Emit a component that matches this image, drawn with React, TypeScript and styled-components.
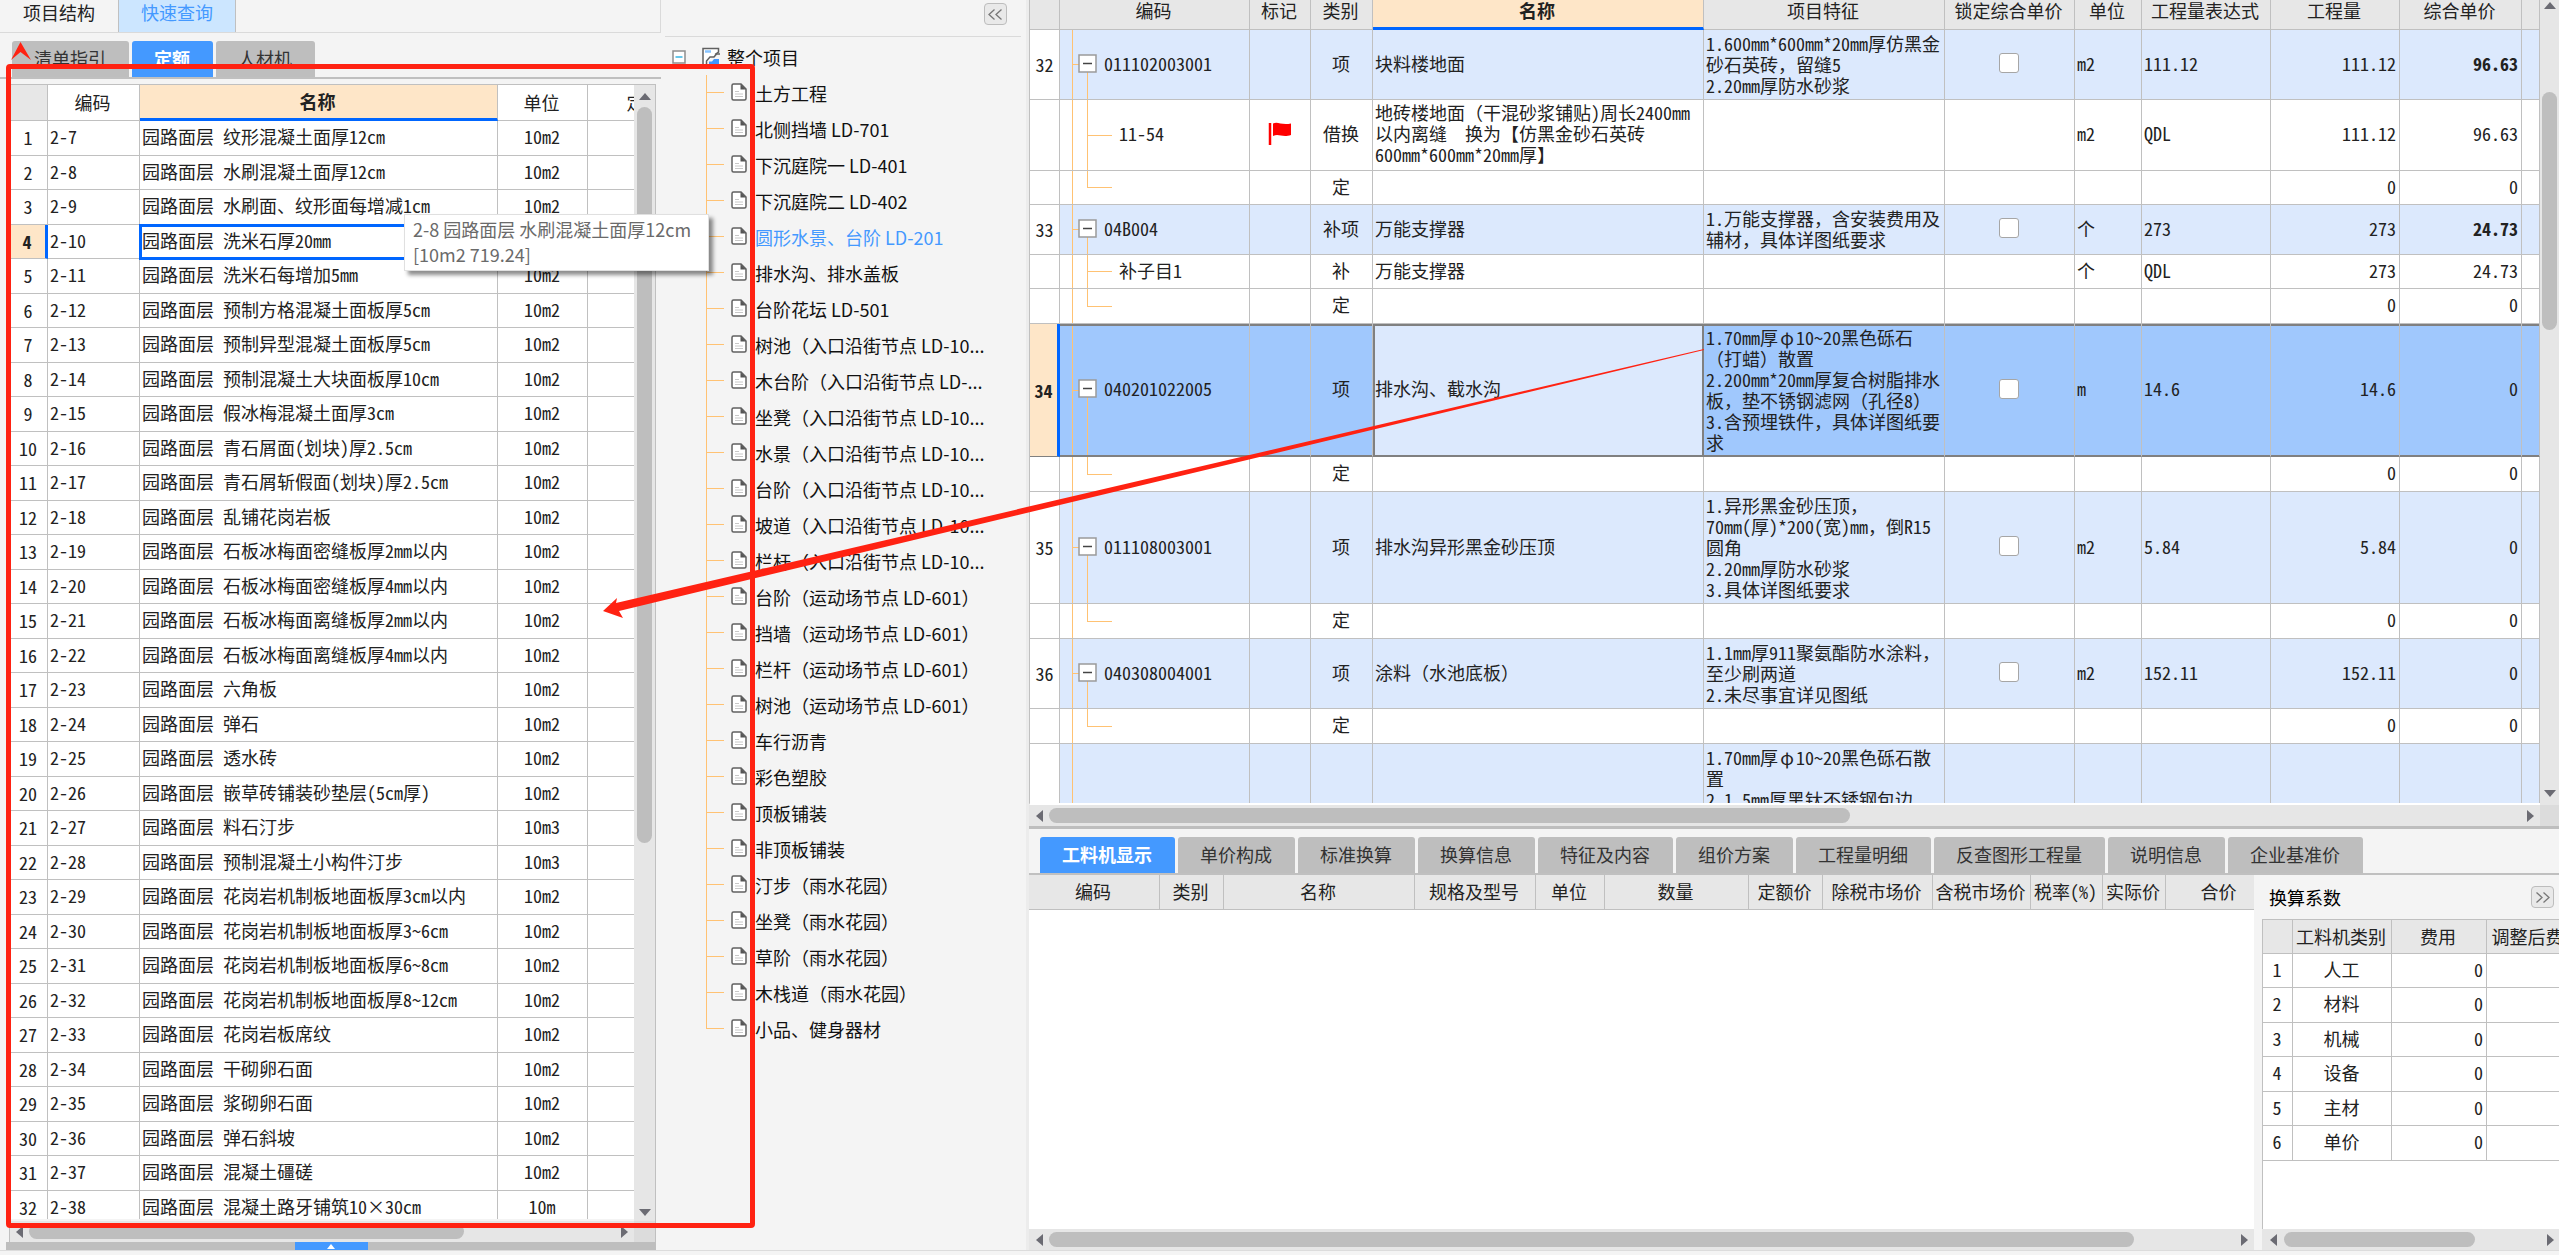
import React from "react";
import styled, { createGlobalStyle, css } from "styled-components";

const LINE = "#c0c0c0";
const BLUE = "#0066ff";
const PEACH = "#fee6c8";
const GUIDE = "#ffc273";
const RED = "#ff2212";

const Global = createGlobalStyle`
  *, *::before, *::after { box-sizing: border-box; }
  body {
    margin: 0;
    background: #f4f4f4;
    color: #222;
    font: 18px/21px "Noto Sans CJK SC", "Liberation Sans", sans-serif;
  }
  button { font: inherit; color: inherit; margin: 0; padding: 0; border: 0; background: none; }
`;

const Page = styled.div`
  position: relative;
  display: flex;
  flex-direction: column;
  height: 100vh;
  overflow: hidden;
`;
const Main = styled.main`
  display: flex;
  flex: 1;
  min-height: 0;
`;
const StatusLine = styled.footer`
  height: 5px;
  border-top: 1px solid #dcdcdc;
  background: #f4f4f4;
`;

/* ---------- scroll bars ---------- */
const Bar = styled.div<{ $vertical?: boolean; $size: number }>`
  display: flex;
  flex: 0 0 ${(p) => p.$size}px;
  flex-direction: ${(p) => (p.$vertical ? "column" : "row")};
  align-items: center;
  background: #e6e6e6;
`;
const BarButton = styled.button<{ $length: number }>`
  display: flex;
  align-items: center;
  justify-content: center;
  flex: 0 0 ${(p) => p.$length}px;
  svg { display: block; }
`;
const Track = styled.div<{ $vertical?: boolean }>`
  display: flex;
  flex: 1;
  align-items: stretch;
  align-self: center;
  flex-direction: ${(p) => (p.$vertical ? "column" : "row")};
  ${(p) => (p.$vertical ? "width: 15px;" : "height: 15px;")}
`;
const Space = styled.div<{ $grow: number }>`
  flex: ${(p) => p.$grow} 1 0;
`;
const Thumb = styled(Space)`
  border-radius: 8px;
  background: #bebebe;
`;

const arrowPath = {
  up: "M0 7 L6 0 L12 7 Z",
  down: "M0 0 L6 7 L12 0 Z",
  left: "M7 0 L0 6 L7 12 Z",
  right: "M0 0 L7 6 L0 12 Z",
};

function Arrow({ dir }: { dir: keyof typeof arrowPath }) {
  const tall = dir === "left" || dir === "right";
  return (
    <svg width={tall ? 7 : 12} height={tall ? 12 : 7} aria-hidden="true">
      <path d={arrowPath[dir]} fill="#6b6b73" />
    </svg>
  );
}

type ScrollProps = {
  vertical?: boolean;
  size: number;
  start: number;
  end: number;
  parts: [number, number, number];
};
function ScrollBar({ vertical, size, start, end, parts }: ScrollProps) {
  return (
    <Bar $vertical={vertical} $size={size}>
      <BarButton $length={start} aria-label={vertical ? "向上" : "向左"}>
        <Arrow dir={vertical ? "up" : "left"} />
      </BarButton>
      <Track $vertical={vertical}>
        <Space $grow={parts[0]} />
        <Thumb $grow={parts[1]} />
        <Space $grow={parts[2]} />
      </Track>
      <BarButton $length={end} aria-label={vertical ? "向下" : "向右"}>
        <Arrow dir={vertical ? "down" : "right"} />
      </BarButton>
    </Bar>
  );
}

const BottomScroll = styled.div`
  display: grid;
  flex: 0 0 21px;
  grid-template-columns: minmax(0, 1fr) auto;
  background: #e6e6e6;
`;
const ScrollCorner = styled.div<{ $width: number }>`
  width: ${(p) => p.$width}px;
  background: #dcdcdc;
`;

/* ---------- grid text: half-width latin, full-width punctuation ---------- */
const Wide = styled.span`
  font-feature-settings: normal;
`;
const WideGreek = styled.span`
  display: inline-block;
  width: 18px;
  text-align: center;
`;
function GridText({ children }: { children?: string }) {
  return (
    <>
      {(children ?? "").split(/([，（）【】　]+|φ)/).map((part, i) => {
        if (i % 2 === 0) return part;
        return part === "φ" ? <WideGreek key={i}>{part}</WideGreek> : <Wide key={i}>{part}</Wide>;
      })}
    </>
  );
}

/* ---------- tables ---------- */
const Table = styled.table<{ $width?: string }>`
  width: ${(p) => p.$width ?? "100%"};
  table-layout: fixed;
  border-collapse: separate;
  border-spacing: 0;
  font-feature-settings: "hwid";
`;
const Col = styled.col<{ $w?: number }>`
  ${(p) => p.$w && `width: ${p.$w}px;`}
`;
const Th = styled.th<{ $active?: boolean; $h?: number; $white?: boolean }>`
  height: ${(p) => p.$h ?? 34}px;
  padding: 0 2px 1px 0;
  overflow: hidden;
  border-right: 1px solid ${LINE};
  border-bottom: 1px solid ${LINE};
  background: ${(p) => (p.$white ? "#fff" : "#e7e7e7")};
  font-weight: 400;
  white-space: nowrap;
  ${(p) =>
    p.$active &&
    css`
      border-bottom: 3px solid ${BLUE};
      background: ${PEACH};
      font-weight: 700;
    `}
`;
const Td = styled.td<{ $align?: "center" | "right"; $bold?: boolean }>`
  padding: 0 3px 3px 2px;
  overflow: hidden;
  border-right: 1px solid ${LINE};
  border-bottom: 1px solid ${LINE};
  background: #fff;
  font-weight: ${(p) => (p.$bold ? 700 : 400)};
  text-align: ${(p) => p.$align ?? "left"};
  white-space: pre;
`;
const Viewport = styled.div`
  flex: 1;
  min-width: 0;
  min-height: 0;
  overflow: hidden;
  background: #fff;
`;
const ViewRow = styled.div`
  display: flex;
  flex: 1;
  min-height: 0;
`;

/* ---------- left: quick query ---------- */
const QueryPanel = styled.section`
  display: flex;
  flex: 0 0 661px;
  flex-direction: column;
  min-width: 0;
`;
const TopTabs = styled.div`
  display: flex;
  height: 33px;
  border-right: 1px solid #dadada;
  border-bottom: 1px solid #dadada;
`;
const TopTab = styled.button<{ $on?: boolean }>`
  width: 118px;
  padding-bottom: 8px;
  ${(p) =>
    p.$on &&
    css`
      border: solid ${LINE};
      border-width: 0 1px;
      background: #cce6ff;
      color: #4499ff;
    `}
`;
const TabStrip = styled.div<{ $left: number }>`
  display: flex;
  gap: 3px;
  padding: 8px 0 0 ${(p) => p.$left}px;
  border-bottom: 2px solid ${LINE};
`;
const Tab = styled.button<{ $on?: boolean }>`
  height: 36px;
  padding: 0 23px 2px 22px;
  border-radius: 3px 3px 0 0;
  background: ${(p) => (p.$on ? "#4499ff" : "#bebebe")};
  color: ${(p) => (p.$on ? "#fff" : "#333")};
  font-weight: ${(p) => (p.$on ? 700 : 400)};
  white-space: nowrap;
`;
const QuotaFrame = styled.div`
  display: flex;
  flex: 1;
  flex-direction: column;
  min-height: 0;
  margin: 5px 5px 0 9px;
  border: solid ${LINE};
  border-width: 1px 1px 0 1px;
`;
const QuotaViewport = styled(Viewport)`
  margin-bottom: 2px;
`;
const QuotaRow = styled.tr<{ $selected?: boolean }>`
  height: 35px;
  &:nth-child(even) { height: 34px; }
  td:first-child { padding-bottom: 1px; }
  ${(p) =>
    p.$selected &&
    css`
      td:first-child {
        border-right: 3px solid ${BLUE};
        background: ${PEACH};
        font-weight: 700;
      }
      td:nth-child(3) {
        outline: 3px solid ${BLUE};
        outline-offset: -2px;
      }
    `}
`;
const CollapseBar = styled.div`
  display: flex;
  justify-content: center;
  height: 8px;
  margin: 0 5px 0 6px;
  background: #bebebe;
`;
const CollapseButton = styled.button`
  display: flex;
  align-items: center;
  justify-content: center;
  width: 73px;
  background: #4499ff;
`;

const quotaItems: [string, string, string][] = [
  ["2-7", "纹形混凝土面厚12cm", "10m2"],
  ["2-8", "水刷混凝土面厚12cm", "10m2"],
  ["2-9", "水刷面、纹形面每增减1cm", "10m2"],
  ["2-10", "洗米石厚20mm", "10m2"],
  ["2-11", "洗米石每增加5mm", "10m2"],
  ["2-12", "预制方格混凝土面板厚5cm", "10m2"],
  ["2-13", "预制异型混凝土面板厚5cm", "10m2"],
  ["2-14", "预制混凝土大块面板厚10cm", "10m2"],
  ["2-15", "假冰梅混凝土面厚3cm", "10m2"],
  ["2-16", "青石屑面(划块)厚2.5cm", "10m2"],
  ["2-17", "青石屑斩假面(划块)厚2.5cm", "10m2"],
  ["2-18", "乱铺花岗岩板", "10m2"],
  ["2-19", "石板冰梅面密缝板厚2mm以内", "10m2"],
  ["2-20", "石板冰梅面密缝板厚4mm以内", "10m2"],
  ["2-21", "石板冰梅面离缝板厚2mm以内", "10m2"],
  ["2-22", "石板冰梅面离缝板厚4mm以内", "10m2"],
  ["2-23", "六角板", "10m2"],
  ["2-24", "弹石", "10m2"],
  ["2-25", "透水砖", "10m2"],
  ["2-26", "嵌草砖铺装砂垫层(5cm厚)", "10m2"],
  ["2-27", "料石汀步", "10m3"],
  ["2-28", "预制混凝土小构件汀步", "10m3"],
  ["2-29", "花岗岩机制板地面板厚3cm以内", "10m2"],
  ["2-30", "花岗岩机制板地面板厚3~6cm", "10m2"],
  ["2-31", "花岗岩机制板地面板厚6~8cm", "10m2"],
  ["2-32", "花岗岩机制板地面板厚8~12cm", "10m2"],
  ["2-33", "花岗岩板席纹", "10m2"],
  ["2-34", "干砌卵石面", "10m2"],
  ["2-35", "浆砌卵石面", "10m2"],
  ["2-36", "弹石斜坡", "10m2"],
  ["2-37", "混凝土礓磋", "10m2"],
  ["2-38", "混凝土路牙铺筑10×30cm", "10m"],
];

function QuickQuery() {
  return (
    <QueryPanel>
      <TopTabs role="tablist">
        <TopTab role="tab">项目结构</TopTab>
        <TopTab role="tab" aria-selected $on>快速查询</TopTab>
      </TopTabs>
      <TabStrip $left={12} role="tablist">
        <Tab role="tab">清单指引</Tab>
        <Tab role="tab" aria-selected $on>定额</Tab>
        <Tab role="tab">人材机</Tab>
      </TabStrip>
      <QuotaFrame>
        <ViewRow>
          <QuotaViewport>
            <Table $width="712px">
              <colgroup>
                <Col $w={38} /><Col $w={92} /><Col $w={358} /><Col $w={90} /><Col $w={134} />
              </colgroup>
              <thead>
                <tr>
                  <Th $h={36} />
                  <Th $white>编码</Th>
                  <Th $active>名称</Th>
                  <Th $white>单位</Th>
                  <Th $white>定额价</Th>
                </tr>
              </thead>
              <tbody>
                {quotaItems.map(([code, name, unit], i) => (
                  <QuotaRow key={code} $selected={i === 3}>
                    <Td $align="center">{i + 1}</Td>
                    <Td>{code}</Td>
                    <Td>{"园路面层 " + name}</Td>
                    <Td $align="center">{unit}</Td>
                    <Td />
                  </QuotaRow>
                ))}
              </tbody>
            </Table>
          </QuotaViewport>
          <ScrollBar vertical size={21} start={22} end={18} parts={[0, 735, 360]} />
        </ViewRow>
        <BottomScroll>
          <ScrollBar size={21} start={19} end={20} parts={[0, 435, 150]} />
          <ScrollCorner $width={21} />
        </BottomScroll>
      </QuotaFrame>
      <CollapseBar>
        <CollapseButton aria-label="展开">
          <svg width="8" height="5" aria-hidden="true"><path d="M0 5L4 0L8 5Z" fill="#fff" /></svg>
        </CollapseButton>
      </CollapseBar>
    </QueryPanel>
  );
}

/* ---------- middle: project tree ---------- */
const TreePanel = styled.section`
  flex: 0 0 365px;
  overflow: hidden;
`;
const TreeHead = styled.div`
  display: flex;
  justify-content: flex-end;
  height: 37px;
  margin: 0 5px 2px 4px;
  padding: 3px 14px 0 0;
  border-bottom: 1px solid #dadada;
`;
const ChevronButton = styled.button`
  display: flex;
  align-items: center;
  justify-content: center;
  width: 23px;
  height: 22px;
  border: 1px solid #bdbdbd;
  border-radius: 4px;
  background: #e9e9e9;
`;
const TreeRoot = styled.div`
  display: flex;
  align-items: center;
  height: 36px;
  padding-left: 11px;
  color: #111;
  svg { display: block; }
`;
const TreeBox = styled.button`
  width: 14px;
  height: 14px;
  margin-right: 15px;
`;
const RootIcon = styled.span`
  width: 26px;
`;
const TreeList = styled.ul`
  margin: 0;
  padding: 0;
  list-style: none;
`;
const TreeItem = styled.li<{ $on?: boolean }>`
  display: flex;
  align-items: center;
  gap: 8px;
  height: 36px;
  padding-left: 70px;
  color: ${(p) => (p.$on ? "#4499ff" : "#111")};
  white-space: nowrap;
  background:
    linear-gradient(${GUIDE}, ${GUIDE}) 45px 0 / 1px 100% no-repeat,
    linear-gradient(${GUIDE}, ${GUIDE}) 45px 17px / 18px 1px no-repeat;
  &:last-child {
    background:
      linear-gradient(${GUIDE}, ${GUIDE}) 45px 0 / 1px 17px no-repeat,
      linear-gradient(${GUIDE}, ${GUIDE}) 45px 17px / 18px 1px no-repeat;
  }
  svg { display: block; margin-bottom: 2px; }
`;

const treeItems = [
  "土方工程",
  "北侧挡墙 LD-701",
  "下沉庭院一 LD-401",
  "下沉庭院二 LD-402",
  "圆形水景、台阶 LD-201",
  "排水沟、排水盖板",
  "台阶花坛 LD-501",
  "树池（入口沿街节点 LD-10...",
  "木台阶（入口沿街节点 LD-...",
  "坐凳（入口沿街节点 LD-10...",
  "水景（入口沿街节点 LD-10...",
  "台阶（入口沿街节点 LD-10...",
  "坡道（入口沿街节点 LD-10...",
  "栏杆（入口沿街节点 LD-10...",
  "台阶（运动场节点 LD-601）",
  "挡墙（运动场节点 LD-601）",
  "栏杆（运动场节点 LD-601）",
  "树池（运动场节点 LD-601）",
  "车行沥青",
  "彩色塑胶",
  "顶板铺装",
  "非顶板铺装",
  "汀步（雨水花园）",
  "坐凳（雨水花园）",
  "草阶（雨水花园）",
  "木栈道（雨水花园）",
  "小品、健身器材",
];

function PageIcon() {
  return (
    <svg width="16" height="18" aria-hidden="true">
      <path d="M1 2.5Q1 1 2.5 1H10L15 6V15.5Q15 17 13.5 17H2.5Q1 17 1 15.5Z" fill="#fff" stroke="#606060" strokeWidth="1.5" />
      <path d="M9.5 1L15 6.5H9.5Z" fill="#555" />
      <path d="M4 8.5H8M4 11H12M4 13.5H12" stroke="#c8c8c8" />
    </svg>
  );
}

function ProjectTree() {
  return (
    <TreePanel>
      <TreeHead>
        <ChevronButton aria-label="收起">
          <svg width="15" height="11" aria-hidden="true">
            <path d="M6.5 .5L1 5.5L6.5 10.5M13.5 .5L8 5.5L13.5 10.5" fill="none" stroke="#777" strokeWidth="1.3" />
          </svg>
        </ChevronButton>
      </TreeHead>
      <TreeRoot>
        <TreeBox aria-label="折叠">
          <svg width="14" height="14" aria-hidden="true">
            <rect x="1" y="1" width="12" height="12" fill="#fff" stroke="#8e8e8e" strokeWidth="1.5" />
            <path d="M3.5 7H10.5" stroke="#35b5e5" strokeWidth="1.5" />
          </svg>
        </TreeBox>
        <RootIcon>
          <svg width="20" height="20" aria-hidden="true">
            <path d="M2 19V1.5H17.5V5L14 7.5" fill="#fff" stroke="#606060" strokeWidth="1.5" />
            <path d="M4 4.5H10" stroke="#88c4ff" strokeWidth="2.5" />
            <path d="M5.5 19V14L9 10H13L15.5 7H19" fill="none" stroke="#606060" strokeWidth="1.5" />
            <path d="M8 14.5H11L13 12H18V20H8Z" fill="#3f95ff" />
          </svg>
        </RootIcon>
        整个项目
      </TreeRoot>
      <TreeList>
        {treeItems.map((label, i) => (
          <TreeItem key={i} $on={i === 4}>
            <PageIcon />
            {label}
          </TreeItem>
        ))}
      </TreeList>
    </TreePanel>
  );
}

/* ---------- right: bill of quantities ---------- */
const Work = styled.section`
  display: flex;
  flex: 1;
  flex-direction: column;
  min-width: 0;
  border-left: 3px solid #ececec;
`;
const BillArea = styled.div`
  display: flex;
  flex: 828 1 0;
  flex-direction: column;
  min-height: 0;
  border-bottom: 3px solid #bebebe;
`;
const BillViewport = styled(Viewport)`
  border-bottom: 2px solid #fff;
  border-left: 1px solid ${LINE};
`;
const BillTh = styled(Th)`
  height: 30px;
  vertical-align: top;
  line-height: 20px;
`;
const rail = `linear-gradient(${GUIDE}, ${GUIDE})`;
const BillRow = styled.tr<{ $h: number; $item?: boolean; $selected?: boolean }>`
  height: ${(p) => p.$h}px;
  td { background-color: ${(p) => (p.$item ? "#dce9fd" : "#fff")}; }
  td:first-child { padding: 0; background: #fff; }
  ${(p) =>
    p.$selected &&
    css`
      td {
        background-color: #a0c8fd;
        border-bottom-color: #808080;
        box-shadow: inset 0 2px 0 #808080, inset 0 -1px 0 #808080;
      }
      td:first-child {
        border-right: 3px solid ${BLUE};
        box-shadow: none;
        background: ${PEACH};
        font-weight: 700;
      }
      td:nth-child(5) {
        border-right-color: #808080;
        background-color: #dce9fd;
        box-shadow: inset 2px 2px 0 #808080, inset -1px -1px 0 #808080;
      }
    `}
`;
const CodeCell = styled(Td)<{ $kind: "item" | "mid" | "last" | "open" }>`
  padding-left: ${(p) => (p.$kind === "item" ? 18 : 59)}px;
  background-repeat: no-repeat;
  ${(p) =>
    p.$kind === "item" &&
    css`
      background-image: ${rail}, ${rail}, ${rail};
      background-position: 12px 0, 12px 50%, 27px 100%;
      background-size: 1px 100%, 8px 1px, 1px 50%;
    `}
  ${(p) =>
    p.$kind === "mid" &&
    css`
      background-image: ${rail}, ${rail}, ${rail};
      background-position: 12px 0, 27px 50%, 27px 0;
      background-size: 1px 100%, 25px 1px, 1px 100%;
    `}
  ${(p) =>
    p.$kind === "last" &&
    css`
      background-image: ${rail}, ${rail}, ${rail};
      background-position: 12px 0, 27px 50%, 27px 0;
      background-size: 1px 100%, 25px 1px, 1px 50%;
    `}
  ${(p) =>
    p.$kind === "open" &&
    css`
      background-image: ${rail};
      background-position: 12px 0;
      background-size: 1px 100%;
    `}
`;
const CodeLine = styled.span`
  display: flex;
  align-items: center;
  gap: 7px;
`;
const Toggle = styled.button`
  display: block;
  width: 19px;
  height: 19px;
  svg { display: block; }
`;
const FeatureText = styled.div`
  padding: 2px 0 0;
  white-space: pre;
`;
const Check = styled.input`
  display: block;
  width: 20px;
  height: 20px;
  margin: 0 auto;
  appearance: none;
  border: 1px solid #a6a6a6;
  border-radius: 3px;
  background: #fff;
`;
const FlagSlot = styled.span`
  display: flex;
  justify-content: center;
`;

type Row = {
  h: number;
  no?: string;
  code?: string;
  kind: "item" | "mid" | "last" | "open";
  flag?: boolean;
  type?: string;
  name?: string;
  feature?: string;
  unit?: string;
  expr?: string;
  qty?: string;
  price?: string;
  bold?: boolean;
  selected?: boolean;
};
const fixed = (h: number): Row => ({ h, kind: "last", type: "定", qty: "0", price: "0" });

const billRows: Row[] = [
  { h: 70, no: "32", code: "011102003001", kind: "item", type: "项", name: "块料楼地面", feature: "1.600mm*600mm*20mm厚仿黑金\n砂石英砖，留缝5\n2.20mm厚防水砂浆", unit: "m2", expr: "111.12", qty: "111.12", price: "96.63", bold: true },
  { h: 71, code: "11-54", kind: "mid", flag: true, type: "借换", name: "地砖楼地面（干混砂浆铺贴)周长2400mm\n以内离缝　换为【仿黑金砂石英砖\n600mm*600mm*20mm厚】", unit: "m2", expr: "QDL", qty: "111.12", price: "96.63" },
  fixed(34),
  { h: 50, no: "33", code: "04B004", kind: "item", type: "补项", name: "万能支撑器", feature: "1.万能支撑器，含安装费用及\n辅材，具体详图纸要求", unit: "个", expr: "273", qty: "273", price: "24.73", bold: true },
  { h: 34, code: "补子目1", kind: "mid", type: "补", name: "万能支撑器", unit: "个", expr: "QDL", qty: "273", price: "24.73" },
  fixed(35),
  { h: 133, no: "34", code: "040201022005", kind: "item", type: "项", name: "排水沟、截水沟", feature: "1.70mm厚φ10~20黑色砾石\n（打蜡）散置\n2.200mm*20mm厚复合树脂排水\n板，垫不锈钢滤网（孔径8）\n3.含预埋铁件，具体详图纸要\n求", unit: "m", expr: "14.6", qty: "14.6", price: "0", selected: true },
  fixed(35),
  { h: 112, no: "35", code: "011108003001", kind: "item", type: "项", name: "排水沟异形黑金砂压顶", feature: "1.异形黑金砂压顶，\n70mm(厚)*200(宽)mm，倒R15\n圆角\n2.20mm厚防水砂浆\n3.具体详图纸要求", unit: "m2", expr: "5.84", qty: "5.84", price: "0" },
  fixed(35),
  { h: 70, no: "36", code: "040308004001", kind: "item", type: "项", name: "涂料（水池底板）", feature: "1.1mm厚911聚氨酯防水涂料，\n至少刷两道\n2.未尽事宜详见图纸", unit: "m2", expr: "152.11", qty: "152.11", price: "0" },
  fixed(35),
  { h: 70, kind: "open", feature: "1.70mm厚φ10~20黑色砾石散\n置\n2.1.5mm厚黑钛不锈钢包边" },
];

function Bill() {
  return (
    <BillArea>
      <ViewRow>
        <BillViewport>
          <Table>
            <colgroup>
              <Col $w={30} /><Col $w={190} /><Col $w={61} /><Col $w={62} /><Col $w={331} />
              <Col $w={241} /><Col $w={130} /><Col $w={67} /><Col $w={129} /><Col $w={129} />
              <Col $w={122} /><Col />
            </colgroup>
            <thead>
              <tr>
                <BillTh />
                <BillTh>编码</BillTh>
                <BillTh>标记</BillTh>
                <BillTh>类别</BillTh>
                <BillTh $active>名称</BillTh>
                <BillTh>项目特征</BillTh>
                <BillTh>锁定综合单价</BillTh>
                <BillTh>单位</BillTh>
                <BillTh>工程量表达式</BillTh>
                <BillTh>工程量</BillTh>
                <BillTh>综合单价</BillTh>
                <BillTh />
              </tr>
            </thead>
            <tbody>
              {billRows.map((r, i) => {
                const item = r.kind === "item" || r.kind === "open";
                return (
                  <BillRow key={i} $h={r.h} $item={item} $selected={r.selected}>
                    <Td $align="center">{r.no}</Td>
                    <CodeCell $kind={r.kind}>
                      {r.kind === "item" ? (
                        <CodeLine>
                          <Toggle aria-label="折叠">
                            <svg width="19" height="19" aria-hidden="true">
                              <rect x="1" y="1" width="17" height="17" fill="#fff" stroke="#9a9a9a" strokeWidth="1.5" />
                              <path d="M5 9.5H14" stroke="#444" strokeWidth="1.5" />
                            </svg>
                          </Toggle>
                          {r.code}
                        </CodeLine>
                      ) : (
                        r.code
                      )}
                    </CodeCell>
                    <Td>
                      {r.flag && (
                        <FlagSlot>
                          <svg width="24" height="24" aria-hidden="true">
                            <path d="M2 1V23" stroke="#f00" strokeWidth="2.5" />
                            <path d="M5 1.5C10 -1 13 3.5 23 1.5V13C14 16 11 11 5 14Z" fill="#f00" />
                          </svg>
                        </FlagSlot>
                      )}
                    </Td>
                    <Td $align="center">{r.type}</Td>
                    <Td><GridText>{r.name}</GridText></Td>
                    <Td>{r.feature && <FeatureText><GridText>{r.feature}</GridText></FeatureText>}</Td>
                    <Td>{r.kind === "item" && <Check type="checkbox" aria-label={"锁定综合单价 " + r.code} />}</Td>
                    <Td>{r.unit}</Td>
                    <Td>{r.expr}</Td>
                    <Td $align="right">{r.qty}</Td>
                    <Td $align="right" $bold={r.bold}>{r.price}</Td>
                    <Td />
                  </BillRow>
                );
              })}
            </tbody>
          </Table>
        </BillViewport>
        <ScrollBar vertical size={19} start={10} end={24} parts={[83, 239, 454]} />
      </ViewRow>
      <BottomScroll>
        <ScrollBar size={21} start={20} end={20} parts={[0, 801, 670]} />
        <ScrollCorner $width={19} />
      </BottomScroll>
    </BillArea>
  );
}

/* ---------- right bottom: details ---------- */
const DetailArea = styled.div`
  display: flex;
  flex: 422 1 0;
  flex-direction: column;
  min-height: 0;
`;
const DetailBody = styled.div`
  display: grid;
  flex: 1;
  grid-template-columns: minmax(0, 1fr) 297px;
  gap: 8px;
  min-height: 0;
`;
const DetailPane = styled.div`
  display: flex;
  flex-direction: column;
  min-width: 0;
  min-height: 0;
`;
const RatioHead = styled.div`
  display: flex;
  align-items: center;
  justify-content: space-between;
  height: 44px;
  padding: 0 5px 0 7px;
  color: #000;
`;
const RatioViewport = styled(Viewport)`
  border: solid ${LINE};
  border-width: 1px 0 0 1px;
`;
const RatioTr = styled.tr`
  height: 34px;
  &:nth-child(even) { height: 35px; }
`;

const detailTabs = ["工料机显示", "单价构成", "标准换算", "换算信息", "特征及内容", "组价方案", "工程量明细", "反查图形工程量", "说明信息", "企业基准价"];
const detailCols: [string, number][] = [
  ["编码", 131], ["类别", 64], ["名称", 191], ["规格及型号", 121], ["单位", 69], ["数量", 144],
  ["定额价", 74], ["除税市场价", 110], ["含税市场价", 98], ["税率(%)", 72], ["实际价", 63], ["合价", 108],
];
const ratioRows = ["人工", "材料", "机械", "设备", "主材", "单价"];

function Details() {
  return (
    <DetailArea>
      <TabStrip $left={11} role="tablist">
        {detailTabs.map((t, i) => (
          <Tab key={t} role="tab" aria-selected={i === 0} $on={i === 0}>{t}</Tab>
        ))}
      </TabStrip>
      <DetailBody>
        <DetailPane>
          <Viewport>
            <Table $width="1245px">
              <colgroup>{detailCols.map(([t, w]) => <Col key={t} $w={w} />)}</colgroup>
              <thead>
                <tr>{detailCols.map(([t]) => <Th key={t} $h={35}>{t}</Th>)}</tr>
              </thead>
            </Table>
          </Viewport>
          <ScrollBar size={21} start={20} end={20} parts={[0, 1086, 100]} />
        </DetailPane>
        <DetailPane>
          <RatioHead>
            换算系数
            <ChevronButton aria-label="展开">
              <svg width="15" height="11" aria-hidden="true">
                <path d="M1.5 .5L7 5.5L1.5 10.5M8.5 .5L14 5.5L8.5 10.5" fill="none" stroke="#777" strokeWidth="1.3" />
              </svg>
            </ChevronButton>
          </RatioHead>
          <RatioViewport>
            <Table $width="326px">
              <colgroup><Col $w={30} /><Col $w={99} /><Col $w={95} /><Col $w={102} /></colgroup>
              <thead>
                <tr>
                  <Th /><Th>工料机类别</Th><Th>费用</Th><Th>调整后费用</Th>
                </tr>
              </thead>
              <tbody>
                {ratioRows.map((t, i) => (
                  <RatioTr key={t}>
                    <Td $align="center">{i + 1}</Td>
                    <Td $align="center">{t}</Td>
                    <Td $align="right">0</Td>
                    <Td />
                  </RatioTr>
                ))}
              </tbody>
            </Table>
          </RatioViewport>
          <ScrollBar size={21} start={22} end={18} parts={[0, 191, 66]} />
        </DetailPane>
      </DetailBody>
    </DetailArea>
  );
}

/* ---------- overlays ---------- */
const Tooltip = styled.div`
  position: absolute;
  top: 214px;
  left: 404px;
  padding: 2px 17px 3px 8px;
  border: 1px solid #e0e0e0;
  background: #fff;
  box-shadow: 4px 4px 4px rgba(0, 0, 0, 0.45);
  color: #6a6a6a;
  line-height: 25px;
  white-space: pre;
`;
const MarkBox = styled.div`
  position: absolute;
  top: 64px;
  bottom: 27px;
  left: 6px;
  width: 749px;
  border: 5px solid ${RED};
  border-radius: 4px;
  pointer-events: none;
`;
const MarkDrawing = styled.svg`
  position: absolute;
  top: 0;
  left: 0;
  overflow: visible;
  pointer-events: none;
`;

export default function App() {
  return (
    <Page>
      <Global />
      <Main>
        <QuickQuery />
        <ProjectTree />
        <Work>
          <Bill />
          <Details />
        </Work>
      </Main>
      <StatusLine />
      <Tooltip role="tooltip">{"2-8 园路面层 水刷混凝土面厚12cm\n[10m2 719.24]"}</Tooltip>
      <MarkBox />
      <MarkDrawing width="1720" height="640" aria-hidden="true">
        <path d="M20.5 42L31 60L20.5 52L11 60Z" fill={RED} />
        <path d="M603 611L617 598L616 603L1704 349L1704 350L619 611L623 618Z" fill={RED} />
      </MarkDrawing>
    </Page>
  );
}
